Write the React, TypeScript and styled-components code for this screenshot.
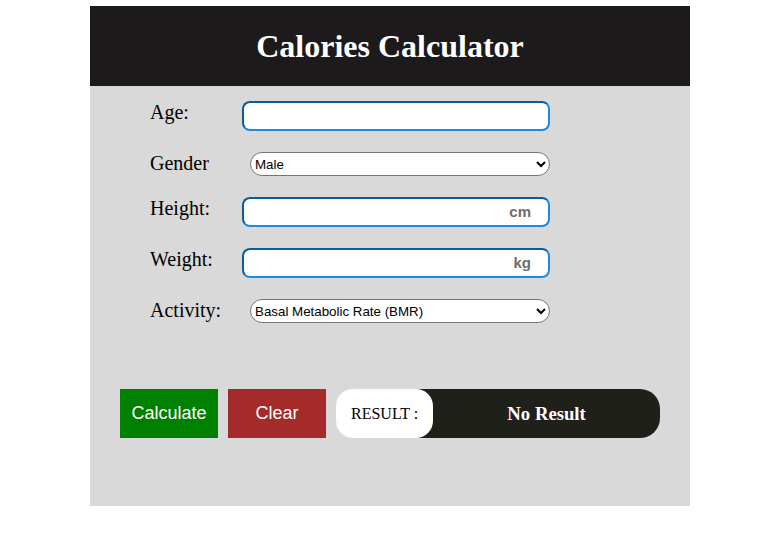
import React from "react";
import styled, { createGlobalStyle } from "styled-components";

const Global = createGlobalStyle`
  html, body { margin: 0; padding: 0; background: #ffffff; }
  body { font-family: "Liberation Serif", "Times New Roman", serif; }
  * { box-sizing: border-box; }
`;

const Card = styled.div`
  width: 600px;
  height: 500px;
  margin: 6px 0 0 90px;
  background: #d9d9d9;
  display: flex;
  flex-direction: column;
`;

const Header = styled.header`
  height: 80px;
  background: #1c1a1b;
  display: flex;
  align-items: center;
  justify-content: center;
`;

const Title = styled.h1`
  margin: 0;
  color: #ffffff;
  font-family: "Liberation Serif", "Times New Roman", serif;
  font-weight: bold;
  font-size: 32px;
  line-height: 37px;
`;

const Form = styled.div`
  padding: 15px 0 0 60px;
  display: flex;
  flex-direction: column;
  gap: 21px;
`;

const Row = styled.div`
  display: flex;
  align-items: flex-start;
`;

const Label = styled.label`
  width: 92px;
  font-family: "Liberation Serif", "Times New Roman", serif;
  font-size: 20px;
  line-height: 23px;
  color: #000;
`;

const Field = styled.div`
  position: relative;
  width: 308px;
  height: 30px;
`;

const TextInput = styled.input`
  width: 100%;
  height: 30px;
  border-width: 2px;
  border-style: solid;
  border-color: #0b5b9f #1a8be6 #1a8be6 #0b5b9f;
  border-radius: 8px;
  background: #ffffff;
  outline: none;
  padding: 0 8px;
  font-family: "Liberation Sans", Arial, sans-serif;
  font-size: 14px;
`;

const Unit = styled.span`
  position: absolute;
  right: 19px;
  top: 0;
  height: 30px;
  line-height: 30px;
  font-family: "Liberation Sans", Arial, sans-serif;
  font-weight: bold;
  font-size: 15px;
  color: #6e6e6e;
  pointer-events: none;
`;

const Select = styled.select`
  margin-left: 8px;
  width: 300px;
  height: 24px;
  border: 1px solid #767676;
  border-radius: 12px;
  background: #ffffff;
  color: #000;
  font-family: "Liberation Sans", Arial, sans-serif;
  font-size: 13.33px;
  padding: 0;
`;

const Actions = styled.div`
  margin-top: 66px;
  padding: 0 30px;
  display: flex;
  gap: 10px;
  height: 49px;
`;

const Button = styled.button<{ $bg: string }>`
  width: 98px;
  height: 49px;
  border: none;
  background: ${(p) => p.$bg};
  color: #ffffff;
  font-family: "Liberation Sans", Arial, sans-serif;
  font-size: 18px;
  padding: 0;
`;

const ResultPill = styled.div`
  flex: 1;
  height: 49px;
  background: #20201a;
  border-radius: 20px;
  display: flex;
  align-items: stretch;
`;

const ResultTag = styled.div`
  background: #ffffff;
  border-radius: 17px;
  padding: 0 15px;
  display: flex;
  align-items: center;
  font-family: "Liberation Serif", "Times New Roman", serif;
  font-size: 16px;
  color: #000;
`;

const ResultValue = styled.h3`
  flex: 1;
  margin: 0;
  display: flex;
  align-items: center;
  justify-content: center;
  color: #ffffff;
  font-family: "Liberation Serif", "Times New Roman", serif;
  font-weight: bold;
  font-size: 18.72px;
`;

export default function App() {
  return (
    <>
      <Global />
      <Card>
        <Header>
          <Title>Calories Calculator</Title>
        </Header>
        <Form>
          <Row>
            <Label>Age:</Label>
            <Field>
              <TextInput type="text" />
            </Field>
          </Row>
          <Row>
            <Label>Gender</Label>
            <Select defaultValue="male">
              <option value="male">Male</option>
              <option value="female">Female</option>
            </Select>
          </Row>
          <Row>
            <Label>Height:</Label>
            <Field>
              <TextInput type="text" />
              <Unit>cm</Unit>
            </Field>
          </Row>
          <Row>
            <Label>Weight:</Label>
            <Field>
              <TextInput type="text" />
              <Unit>kg</Unit>
            </Field>
          </Row>
          <Row>
            <Label>Activity:</Label>
            <Select defaultValue="bmr">
              <option value="bmr">Basal Metabolic Rate (BMR)</option>
              <option value="sedentary">Sedentary</option>
            </Select>
          </Row>
        </Form>
        <Actions>
          <Button $bg="#008000">Calculate</Button>
          <Button $bg="#a52a2a">Clear</Button>
          <ResultPill>
            <ResultTag>RESULT :</ResultTag>
            <ResultValue>No Result</ResultValue>
          </ResultPill>
        </Actions>
      </Card>
    </>
  );
}
